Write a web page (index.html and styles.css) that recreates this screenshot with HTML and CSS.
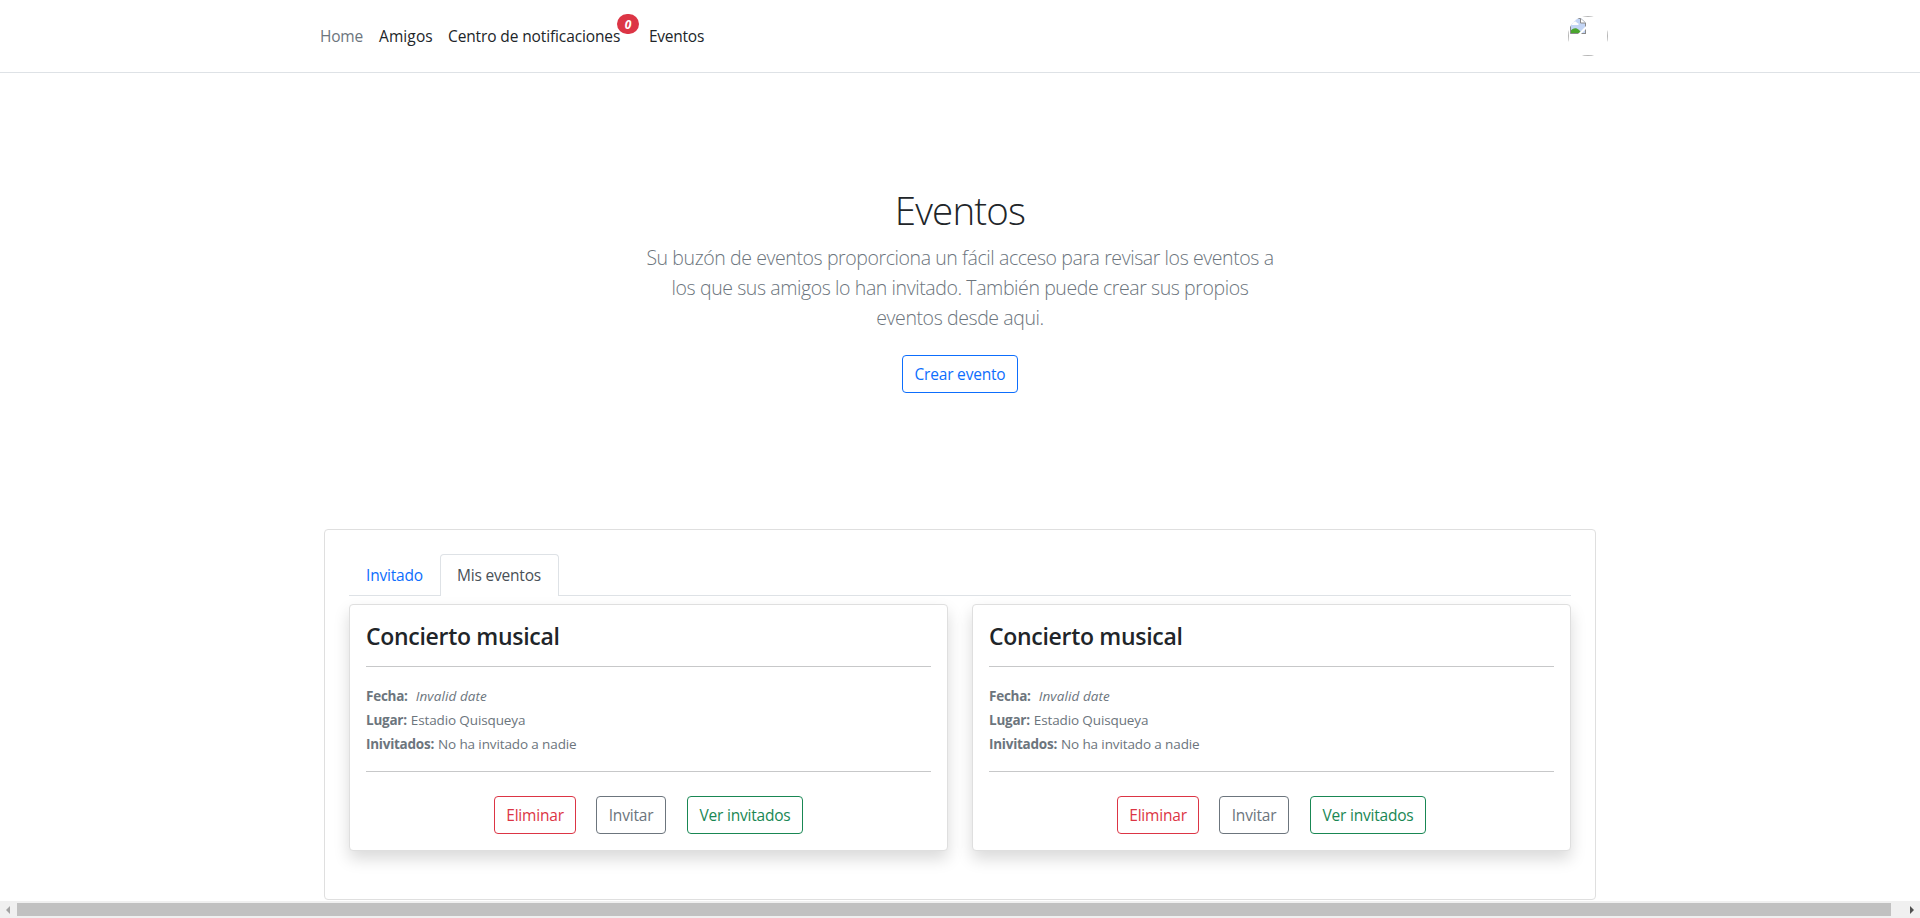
FILE: index.html
```html
<!DOCTYPE html>
<html lang="es">
<head>
<meta charset="utf-8">
<title>Eventos</title>
<link rel="stylesheet" href="styles.css">
</head>
<body>
<header class="topbar">
  <nav class="nav">
    <a class="nav-link home">Home</a>
    <a class="nav-link amigos">Amigos</a>
    <a class="nav-link centro">Centro de notificaciones<i class="badge">0</i></a>
    <a class="nav-link eventos">Eventos</a>
  </nav>
  <div class="avatar">
    <div class="avatar-frame">
      <svg width="16" height="16" viewBox="0 0 16 16"><path d="M0 0h11l5 5v11H0z" fill="#c3d5f5"/><path d="M0 15v-2c3-3 6-4 9-1l3 3z" fill="#4aa52e"/><path d="M2 6c1-3 4-3 5-1 2 0 2 2 1 2H2z" fill="#fff"/><path d="M.5 0v15.500H16M15.500 16V5l-5-4.500H0" fill="none" stroke="#8a8a8a"/><path d="M10.500.5V5h5" fill="#fff" stroke="#8a8a8a"/><path d="M8 16l8-8v3l-5 5z" fill="#fff"/></svg>
    </div>
  </div>
</header>
<section class="hero">
  <h1>Eventos</h1>
  <p class="lead">Su buzón de eventos proporciona un fácil acceso para revisar los eventos a<br>los que sus amigos lo han invitado. También puede crear sus propios<br>eventos desde aqui.</p>
  <a class="btn blue">Crear evento</a>
</section>
<main class="panel">
  <div class="tabs">
    <a class="tab">Invitado</a>
    <a class="tab active">Mis eventos</a>
  </div>
  <div class="cards">
    <article class="card">
      <h2>Concierto musical</h2>
      <hr>
      <div class="details">
        <div><b>Fecha:</b><i class="date">Invalid date</i></div>
        <div><b>Lugar:</b><span class="val">Estadio Quisqueya</span></div>
        <div><b>Inivitados:</b><span class="val">No ha invitado a nadie</span></div>
      </div>
      <hr>
      <div class="actions">
        <a class="btn red">Eliminar</a>
        <a class="btn gray">Invitar</a>
        <a class="btn green">Ver invitados</a>
      </div>
    </article>
    <article class="card">
      <h2>Concierto musical</h2>
      <hr>
      <div class="details">
        <div><b>Fecha:</b><i class="date">Invalid date</i></div>
        <div><b>Lugar:</b><span class="val">Estadio Quisqueya</span></div>
        <div><b>Inivitados:</b><span class="val">No ha invitado a nadie</span></div>
      </div>
      <hr>
      <div class="actions">
        <a class="btn red">Eliminar</a>
        <a class="btn gray">Invitar</a>
        <a class="btn green">Ver invitados</a>
      </div>
    </article>
  </div>
</main>
<div class="scrollbar"><i class="arrow left"></i><div class="thumb"></div><i class="arrow right"></i></div>
</body>
</html>
```
FILE: styles.css
```css
* { box-sizing: border-box; }
body {
  margin: 0;
  height: 918px;
  overflow: hidden;
  display: flex;
  flex-direction: column;
  background: #fff;
  color: #212529;
  font: 15.5px/24px "Open Sans", "Noto Sans", sans-serif;
  white-space: nowrap;
}
.topbar {
  height: 73px;
  flex: none;
  padding: 16px 312px;
  border-bottom: 1px solid #dee2e6;
  display: flex;
  justify-content: space-between;
}
.nav { display: flex; }
.nav-link { position: relative; padding: 8px; }
.home { width: 59px; color: #6c757d; letter-spacing: -.2px; }
.amigos { width: 69px; letter-spacing: .1px; }
.centro { width: 201px; letter-spacing: -.12px; }
.eventos { letter-spacing: -.25px; }
.badge {
  position: absolute;
  left: 177px;
  top: -2px;
  width: 22px;
  height: 20px;
  border-radius: 10px;
  background: #dc3545;
  color: #fff;
  font: italic bold 12px/21px "Open Sans", sans-serif;
  text-align: center;
}
.avatar {
  width: 40px;
  height: 40px;
  border-radius: 50%;
  overflow: hidden;
}
.avatar-frame {
  width: 40px;
  height: 40px;
  border: 1px solid #b5b5b5;
  padding: 1px;
  line-height: 0;
}
.hero {
  height: 456px;
  flex: none;
  padding-top: 113px;
  display: flex;
  flex-direction: column;
  align-items: center;
  text-align: center;
}
h1 { margin: 0 0 9px; font-size: 38.500px; line-height: 48px; font-weight: 300; letter-spacing: -.85px; }
.lead { margin: 0 0 22px; font-size: 19.500px; line-height: 30px; font-weight: 300; letter-spacing: -.41px; color: #6c757d; }
.btn {
  height: 38px;
  border: 1px solid;
  border-radius: 4px;
  padding: 6px 0;
  text-align: center;
  letter-spacing: -.2px;
}
.blue { color: #0d6efd; width: 116px; }
.red { color: #dc3545; width: 82px; }
.gray { color: #6c757d; width: 70px; }
.green { color: #198754; width: 116px; margin-left: 1px; }
.panel {
  width: 1272px;
  height: 371px;
  flex: none;
  margin: 0 auto 1px;
  border: 1px solid #dfdfdf;
  border-radius: 4px;
  padding: 24px;
}
.tabs { height: 42px; display: flex; border-bottom: 1px solid #dee2e6; letter-spacing: -.2px; }
.tab { width: 91px; height: 42px; padding: 9px 17px; color: #0d6efd; }
.active {
  width: 119px;
  color: #495057;
  background: #fff;
  border: 1px solid #dee2e6;
  border-bottom: 0;
  border-radius: 4px 4px 0 0;
  padding: 8px 16px;
}
.cards { display: flex; gap: 24px; margin-top: 8px; }
.card {
  width: 599px;
  height: 247px;
  border: 1px solid #dfdfdf;
  border-radius: 4px;
  padding: 16px;
  background: #fff;
  box-shadow: 0 8px 16px rgba(0, 0, 0, .15);
}
h2 { margin: 0; padding-top: 1px; height: 45px; font-size: 23px; line-height: 29px; font-weight: 600; letter-spacing: -.3px; }
hr { height: 1px; margin: 0; border: 0; background: #c7c8c9; }
.details { height: 104px; padding-top: 17px; font-size: 13.500px; letter-spacing: -.12px; color: #6c757d; }
.details b { letter-spacing: -.25px; }
.date { margin-left: 8px; letter-spacing: .1px; }
.val { margin-left: 4px; }
.actions { display: flex; gap: 20px; padding: 24px 0 0 128px; }
.scrollbar {
  height: 17px;
  flex: none;
  display: flex;
  align-items: center;
  background: #f0f0f0;
  padding-left: 6px;
}
.thumb { width: 1874px; height: 13px; margin: 0 19px 0 7px; background: #c1c1c1; }
.arrow { border: 4px solid transparent; width: 0; height: 0; }
.left { border-left: 0; border-right-color: #a3a3a3; }
.right { border-right: 0; border-left-color: #505050; }
```
